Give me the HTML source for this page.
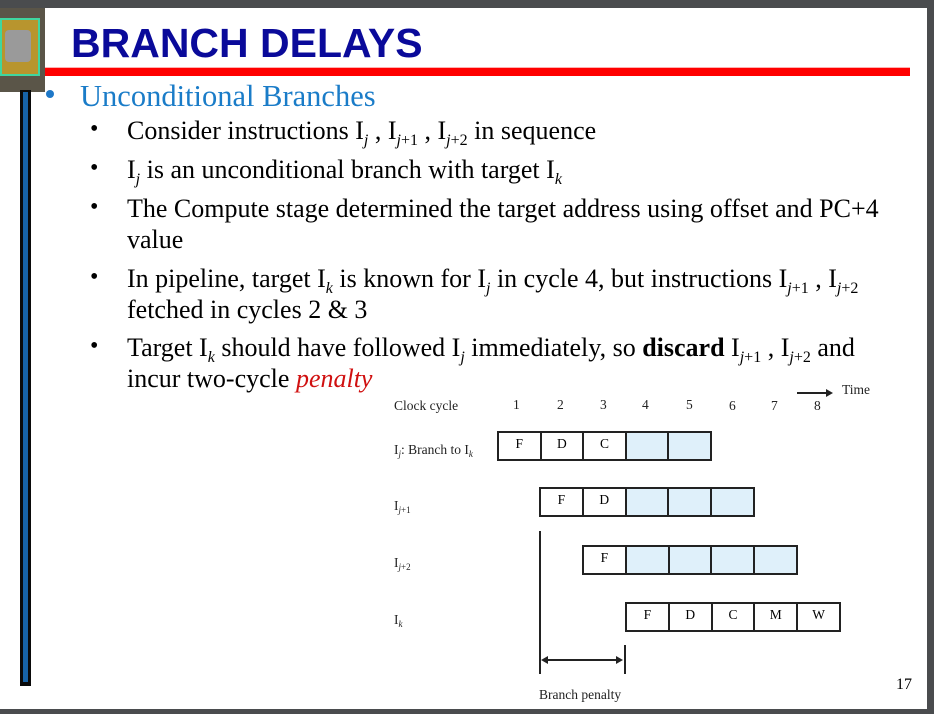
<!DOCTYPE html>
<html><head><meta charset="utf-8">
<style>
*{margin:0;padding:0}
body{width:934px;height:714px;background:#4a4c4e;position:relative;overflow:hidden;font-family:"Liberation Serif",serif}
#slide{position:absolute;left:0;top:8px;width:927px;height:701px;background:#fff;overflow:hidden}
.abs{position:absolute;white-space:nowrap}
.t{font-size:26px;color:#000;left:127px;line-height:31px}
.b{position:absolute;left:90px;font-size:24px}
sub{font-size:16px;vertical-align:-6px;line-height:0}
sub i,i.s{font-style:italic}
.d{font-size:13.5px;color:#222}
.cell{position:absolute;border:2.5px solid #222;box-sizing:border-box;height:30px;display:flex}
.cell div{flex:1;border-right:2.5px solid #222;font-size:13.5px;text-align:center;line-height:22px}
.cell div:last-child{border-right:none}
.cell .e{background:#dff0fa}
</style></head><body>
<div id="slide">
 <div class="abs" style="left:0;top:0;width:45px;height:84px;background:#5a5548"></div>
 <div class="abs" style="left:0;top:10px;width:40px;height:58px;background:#b8952e;border:2px solid #3fd6a0;box-sizing:border-box"></div>
 <div class="abs" style="left:5px;top:22px;width:26px;height:32px;background:#9a9a9a;border-radius:4px"></div>
 <div class="abs" style="left:20px;top:82px;width:11px;height:596px;background:#0a0a0a"></div>
 <div class="abs" style="left:23px;top:84px;width:5px;height:590px;background:#1763a8"></div>
 <div class="abs" style="left:71px;top:12px;font-family:'Liberation Sans',sans-serif;font-weight:bold;font-size:41px;color:#0a0a9a;line-height:46px">BRANCH DELAYS</div>
 <div class="abs" style="left:45px;top:59px;width:865px;height:8px;background:#ff0000;border-top:1px solid #ffb0b0"></div>
 <div class="abs" style="left:46px;top:82px;width:8px;height:8px;border-radius:50%;background:#1e78c8"></div>
 <div class="abs" style="left:80px;top:71px;font-size:30.5px;color:#1a7cc8;line-height:34px">Unconditional Branches</div>
 <div class="b" style="top:108px">•</div>
 <div class="abs t" style="top:107px">Consider instructions I<sub><i>j</i></sub> , I<sub><i>j</i>+1</sub> , I<sub><i>j</i>+2</sub> in sequence</div>
 <div class="b" style="top:147px">•</div>
 <div class="abs t" style="top:146px">I<sub><i>j</i></sub> is an unconditional branch with target I<sub><i>k</i></sub></div>
 <div class="b" style="top:186px">•</div>
 <div class="abs t" style="top:185px">The Compute stage determined the target address using offset and PC+4</div>
 <div class="abs t" style="top:216px">value</div>
 <div class="b" style="top:256px">•</div>
 <div class="abs t" style="top:255px">In pipeline, target I<sub><i>k</i></sub> is known for I<sub><i>j</i></sub> in cycle 4, but instructions I<sub><i>j</i>+1</sub> , I<sub><i>j</i>+2</sub></div>
 <div class="abs t" style="top:286px">fetched in cycles 2 &amp; 3</div>
 <div class="b" style="top:325px">•</div>
 <div class="abs t" style="top:324px">Target I<sub><i>k</i></sub> should have followed I<sub><i>j</i></sub> immediately, so <b>discard</b> I<sub><i>j</i>+1</sub> , I<sub><i>j</i>+2</sub> and</div>
 <div class="abs t" style="top:355px">incur two-cycle <i style="color:#d01010">penalty</i></div>
 <div class="abs d" style="left:394px;top:390px">Clock cycle</div>
 <div class="abs d" style="left:513px;top:389px">1</div>
 <div class="abs d" style="left:557px;top:389px">2</div>
 <div class="abs d" style="left:600px;top:389px">3</div>
 <div class="abs d" style="left:642px;top:389px">4</div>
 <div class="abs d" style="left:686px;top:389px">5</div>
 <div class="abs d" style="left:729px;top:390px">6</div>
 <div class="abs d" style="left:771px;top:390px">7</div>
 <div class="abs d" style="left:814px;top:390px">8</div>
 <div class="abs" style="left:797px;top:384px;width:30px;height:1.5px;background:#222"></div>
 <div class="abs" style="left:826px;top:381px;width:0;height:0;border-left:7px solid #222;border-top:4px solid transparent;border-bottom:4px solid transparent"></div>
 <div class="abs d" style="left:842px;top:374px">Time</div>
 <div class="abs d" style="left:394px;top:434px">I<sub style="font-size:9px;vertical-align:-3px"><i>j</i></sub>: Branch to I<sub style="font-size:9px;vertical-align:-3px"><i>k</i></sub></div>
 <div class="abs d" style="left:394px;top:490px">I<sub style="font-size:9px;vertical-align:-3px"><i>j</i>+1</sub></div>
 <div class="abs d" style="left:394px;top:547px">I<sub style="font-size:9px;vertical-align:-3px"><i>j</i>+2</sub></div>
 <div class="abs d" style="left:394px;top:604px">I<sub style="font-size:9px;vertical-align:-3px"><i>k</i></sub></div>
 <div class="cell" style="left:497px;top:423px;width:215px"><div>F</div><div>D</div><div>C</div><div class="e"></div><div class="e"></div></div>
 <div class="cell" style="left:539px;top:479px;width:216px"><div>F</div><div>D</div><div class="e"></div><div class="e"></div><div class="e"></div></div>
 <div class="cell" style="left:582px;top:537px;width:216px"><div>F</div><div class="e"></div><div class="e"></div><div class="e"></div><div class="e"></div></div>
 <div class="cell" style="left:625px;top:594px;width:216px"><div>F</div><div>D</div><div>C</div><div>M</div><div>W</div></div>
 <div class="abs" style="left:539px;top:523px;width:1.5px;height:143px;background:#222"></div>
 <div class="abs" style="left:624px;top:637px;width:1.5px;height:29px;background:#222"></div>
 <div class="abs" style="left:546px;top:651px;width:72px;height:1.5px;background:#222"></div>
 <div class="abs" style="left:541px;top:648px;border-right:7px solid #222;border-top:4px solid transparent;border-bottom:4px solid transparent"></div>
 <div class="abs" style="left:616px;top:648px;border-left:7px solid #222;border-top:4px solid transparent;border-bottom:4px solid transparent"></div>
 <div class="abs d" style="left:539px;top:679px">Branch penalty</div>
 <div class="abs" style="left:896px;top:668px;font-size:16px">17</div>
</div>
</body></html>
